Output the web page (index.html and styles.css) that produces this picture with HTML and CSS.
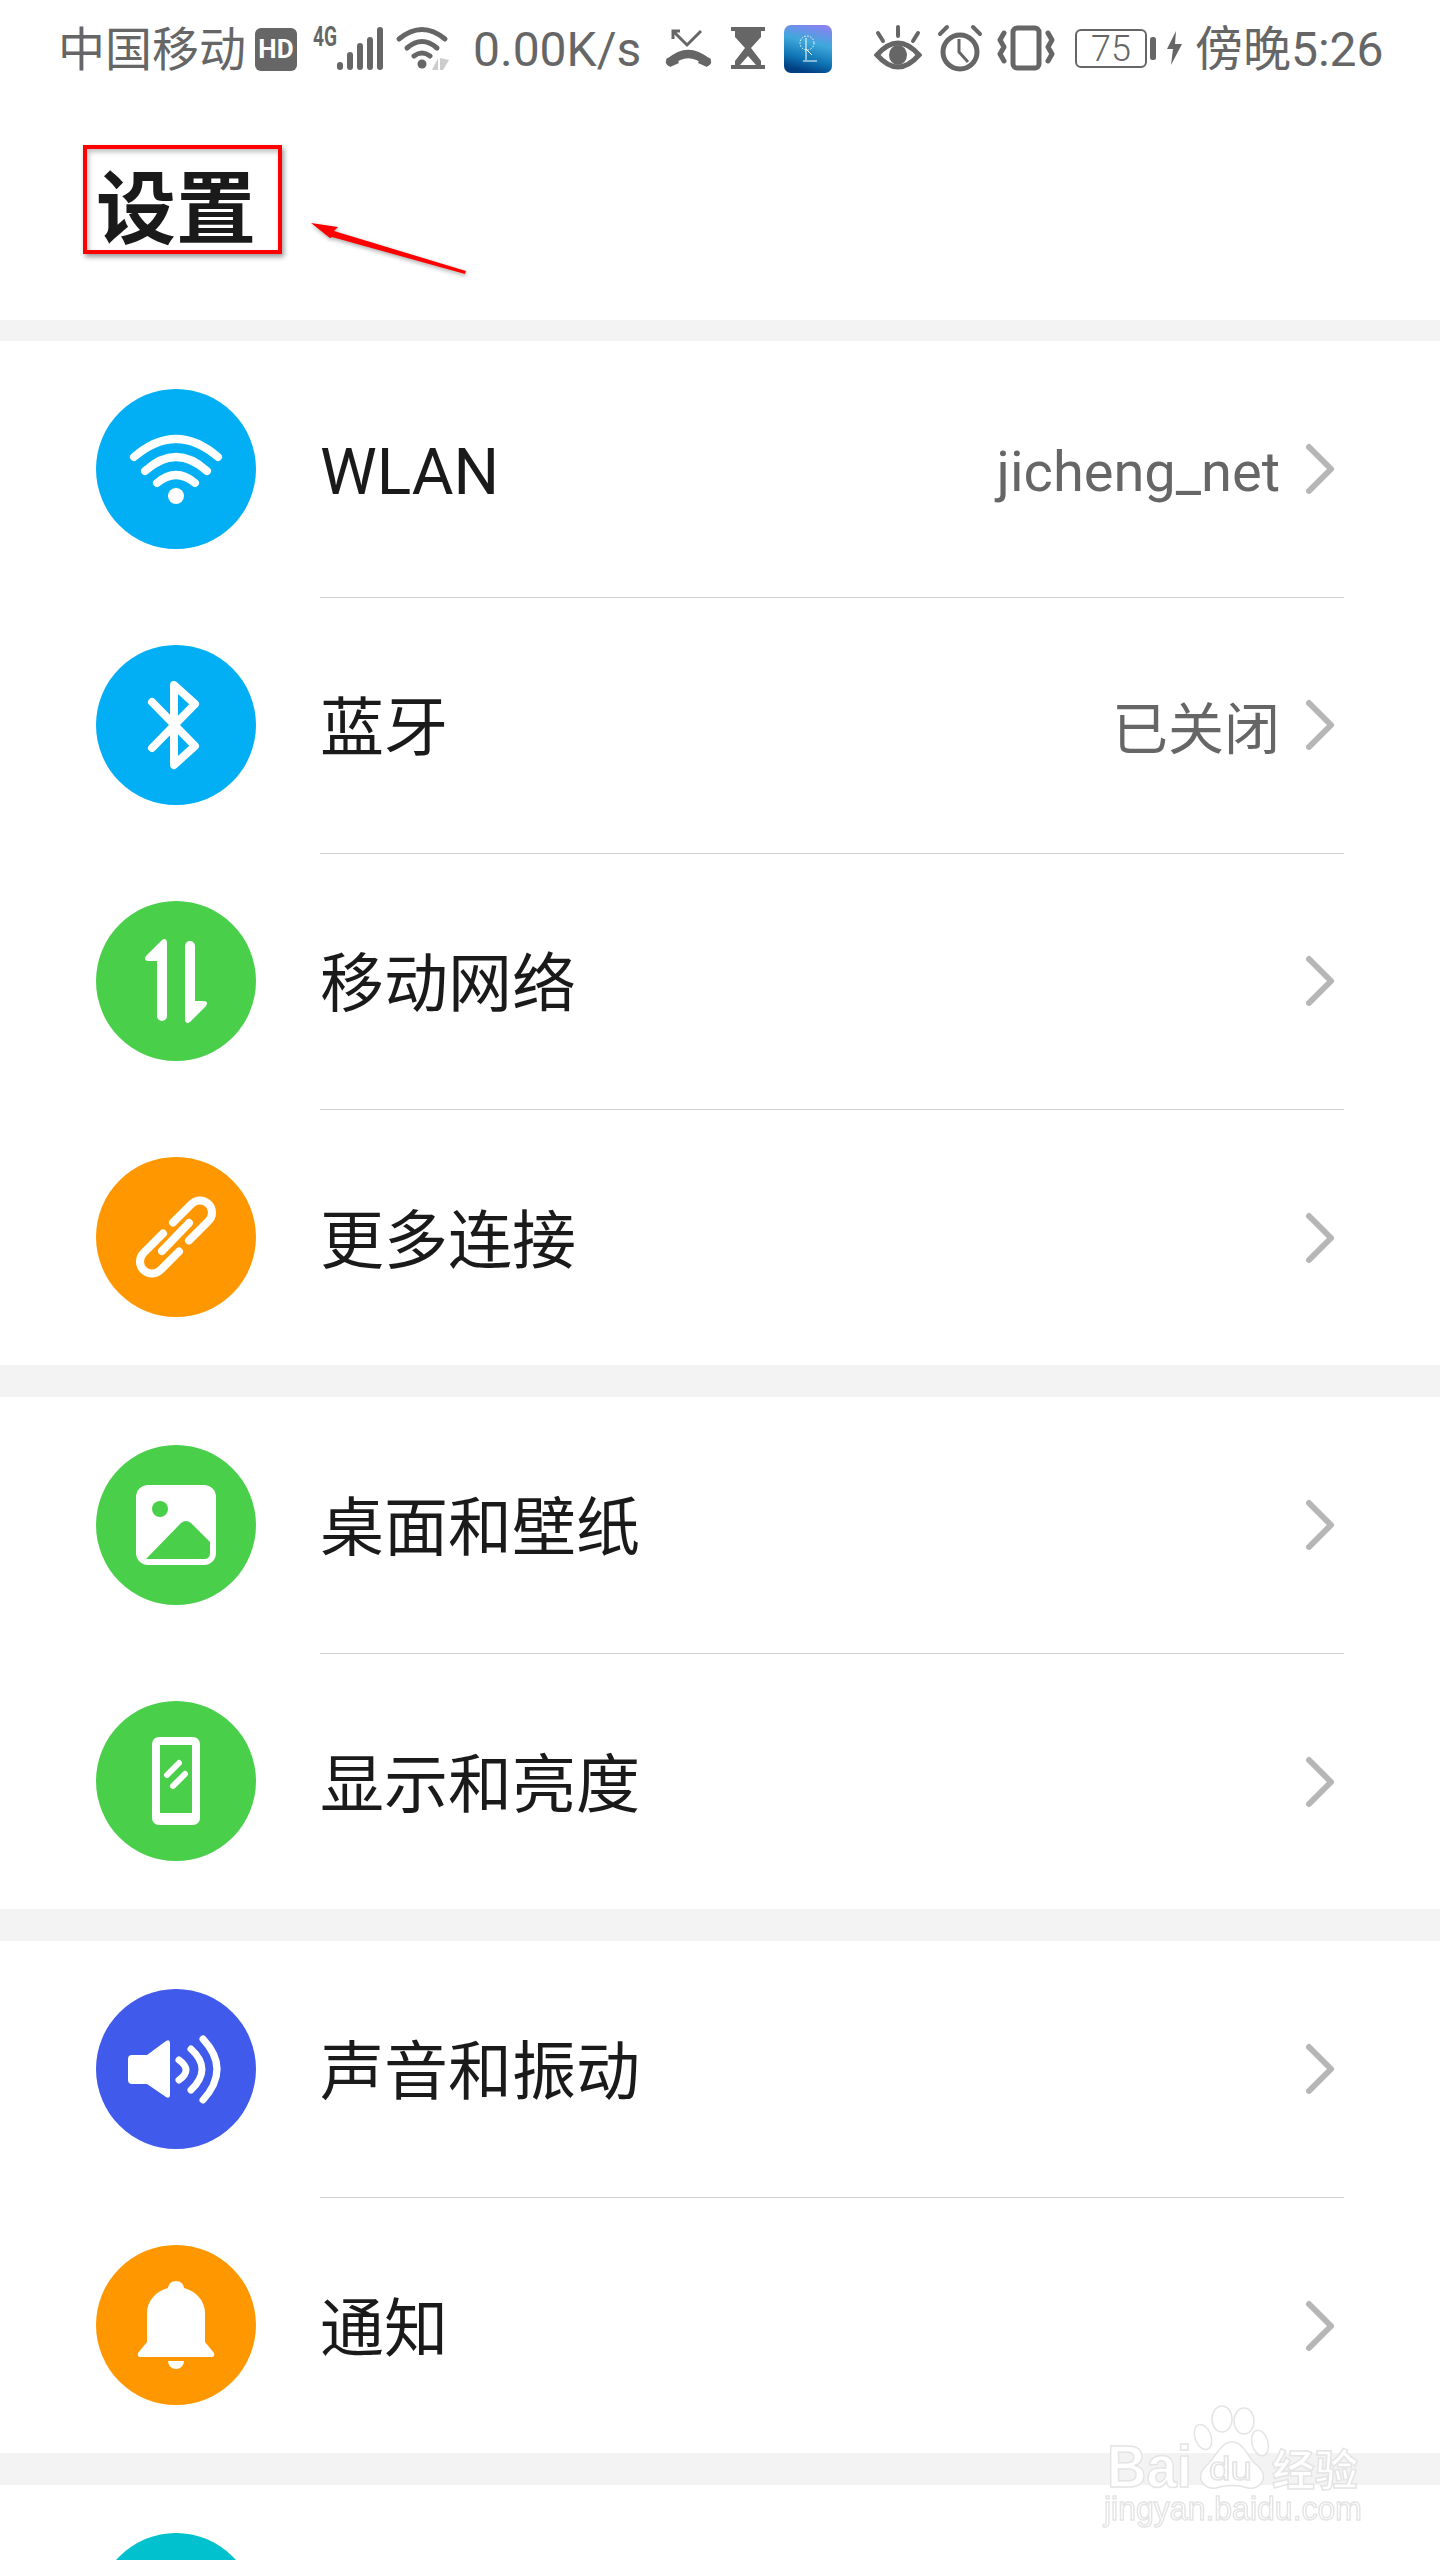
FILE: index.html
```html
<!DOCTYPE html>
<html lang="zh-CN">
<head>
    <meta charset="UTF-8">
    <meta name="viewport" content="width=device-width, initial-scale=1.0">
    <title>设置</title>
    <link rel="stylesheet" href="styles.css">
</head>
<body>
    <!-- status bar -->
    <div class="status-bar">
        <span class="carrier">中国移动</span>
        <span class="hd">HD</span>
        <svg class="sb-net" width="70" height="48" viewBox="0 0 70 48">
            <text class="sb-4g" x="0" y="21" textLength="24" lengthAdjust="spacingAndGlyphs">4G</text>
            <path d="M27 40v2M37 30v12M47 21v21M57 15v27M67 5v37" stroke="#666" stroke-width="6" stroke-linecap="round" fill="none"/>
        </svg>
        <svg class="sb-wifi" width="54" height="48" viewBox="0 0 54 48">
            <g stroke="#666" stroke-width="5" stroke-linecap="round" fill="none">
                <path d="M3 14Q26-5 49 14"/>
                <path d="M11 23Q26 10 41 23"/>
                <path d="M18 31Q26 25 34 31"/>
            </g>
            <circle cx="26" cy="39" r="4.5" fill="#666"/>
            <path d="M42 33V45H36ZM44 33L53 35L47 45H44Z" fill="#ccc"/>
        </svg>
        <span class="speed">0.00K/s</span>
        <svg class="sb-missed" width="47" height="48" viewBox="0 0 47 48">
            <path d="M8 14V6H15M8 6L22 20L36 6" stroke="#666" stroke-width="3" fill="none"/>
            <path d="M5 37Q23 21 42 37" stroke="#666" stroke-width="8" stroke-linecap="round" fill="none"/>
            <path d="M1 34L10 29L14 38L5 42ZM46 34L37 29L33 38L42 42Z" fill="#666"/>
        </svg>
        <svg class="sb-hourglass" width="34" height="48" viewBox="0 0 34 48">
            <path d="M0 2H34V6H30V12L20 23L30 36V40H34V44H0V40H4V36L14 23L4 12V6H0Z" fill="#666"/>
            <path d="M17 31L25 40H9Z" fill="#fff"/>
        </svg>
        <svg class="sb-app" width="48" height="48" viewBox="0 0 48 48">
            <defs>
                <linearGradient id="appGrad" x1="0.8" y1="0" x2="0.55" y2="1">
                    <stop offset="0" stop-color="#8c80f2"/>
                    <stop offset="0.4" stop-color="#3fa8dc"/>
                    <stop offset="0.75" stop-color="#0f74b4"/>
                    <stop offset="1" stop-color="#003f82"/>
                </linearGradient>
            </defs>
            <rect width="48" height="48" rx="7" fill="url(#appGrad)"/>
            <circle cx="23" cy="18" r="7" stroke="#fff" stroke-dasharray="1.5 1.5" fill="none"/>
            <path d="M22 13V24L28 30M22 24V35M19 36H33" stroke="#fff" fill="none"/>
        </svg>
        <svg class="sb-eye" width="48" height="48" viewBox="0 0 48 48">
            <path d="M24 2V11M4 8L9 16M44 8L39 16" stroke="#666" stroke-width="4" stroke-linecap="round"/>
            <path d="M3 30Q24 6 45 30Q24 54 3 30Z" stroke="#666" stroke-width="5" fill="none"/>
            <ellipse cx="24" cy="30" rx="9" ry="10" fill="#666"/>
        </svg>
        <svg class="sb-alarm" width="44" height="48" viewBox="0 0 44 48">
            <circle cx="22" cy="27" r="17" stroke="#666" stroke-width="5" fill="none"/>
            <path d="M2 9L9 2M42 9L35 2" stroke="#666" stroke-width="4" stroke-linecap="round"/>
            <path d="M21 14V27L30 37" stroke="#666" stroke-width="3" fill="none"/>
        </svg>
        <svg class="sb-vibrate" width="56" height="48" viewBox="0 0 56 48">
            <rect x="15" y="3" width="26" height="40" rx="4" stroke="#666" stroke-width="5" fill="none"/>
            <path d="M6 8L2 15L6 22L2 29L6 36M50 8L54 15L50 22L54 29L50 36" stroke="#666" stroke-width="5" stroke-linecap="round" stroke-linejoin="round" fill="none"/>
        </svg>
        <svg class="sb-battery" width="81" height="48" viewBox="0 0 81 48">
            <rect x="1" y="5" width="70" height="37" rx="5" stroke="#666" stroke-width="2" fill="none"/>
            <text class="sb-level" x="36" y="36" text-anchor="middle">75</text>
            <rect x="75" y="12" width="6" height="23" rx="2.5" fill="#666"/>
        </svg>
        <svg class="sb-bolt" width="17" height="48" viewBox="0 0 17 48">
            <path d="M10 6L1 24H7L5 40L16 19H9Z" fill="#666"/>
        </svg>
        <span class="clock">傍晚5:26</span>
    </div>

    <div class="page-head">
        <h1>设置</h1>
    </div>

    <div class="group">
        <div class="row">
            <svg class="icon" viewBox="0 0 160 160">
                <circle cx="80" cy="80" r="80" fill="#02aef4"/>
                <g stroke="#fff" stroke-width="8" stroke-linecap="round" fill="none">
                    <path d="M38 68Q80 32 122 68"/>
                    <path d="M49 82Q80 54 111 82"/>
                    <path d="M61 94Q80 78 99 94"/>
                </g>
                <circle cx="80" cy="107" r="8" fill="#fff"/>
            </svg>
            <div class="row-main">
                <span class="label latin">WLAN</span>
                <span class="value latin">jicheng_net</span>
                <svg class="chevron" viewBox="0 0 32 56"><path d="M5 6L27 28L5 50"/></svg>
            </div>
        </div>
        <div class="row">
            <svg class="icon" viewBox="0 0 160 160">
                <circle cx="80" cy="80" r="80" fill="#02aef4"/>
                <path d="M56 57L99 101L78 120V40L99 59L56 103" stroke="#fff" stroke-width="8" stroke-linecap="round" stroke-linejoin="round" fill="none"/>
            </svg>
            <div class="row-main">
                <span class="label">蓝牙</span>
                <span class="value">已关闭</span>
                <svg class="chevron" viewBox="0 0 32 56"><path d="M5 6L27 28L5 50"/></svg>
            </div>
        </div>
        <div class="row">
            <svg class="icon" viewBox="0 0 160 160">
                <circle cx="80" cy="80" r="80" fill="#4acf4b"/>
                <path d="M66 39L50 55Q47 60 53 60H61V115A5 5 0 0 0 71 115V41Q70 36 66 39Z" fill="#fff"/>
                <path d="M66 39L50 55Q47 60 53 60H61V115A5 5 0 0 0 71 115V41Q70 36 66 39Z" fill="#fff" transform="rotate(180 80 80)"/>
            </svg>
            <div class="row-main">
                <span class="label">移动网络</span>
                <svg class="chevron" viewBox="0 0 32 56"><path d="M5 6L27 28L5 50"/></svg>
            </div>
        </div>
        <div class="row">
            <svg class="icon" viewBox="0 0 160 160">
                <circle cx="80" cy="80" r="80" fill="#ff9800"/>
                <g stroke="#fff" stroke-width="8" stroke-linecap="round" fill="none">
                    <path d="M77 65.5L95.5 47A12 12 0 0 1 112.5 64L93 83.5"/>
                    <path d="M83 94.5L64.5 113A12 12 0 0 1 47.500 96L67 76.500"/>
                    <path d="M66 94L93 66"/>
                </g>
            </svg>
            <div class="row-main">
                <span class="label">更多连接</span>
                <svg class="chevron" viewBox="0 0 32 56"><path d="M5 6L27 28L5 50"/></svg>
            </div>
        </div>
    </div>

    <div class="group">
        <div class="row">
            <svg class="icon" viewBox="0 0 160 160">
                <circle cx="80" cy="80" r="80" fill="#4acf4b"/>
                <rect x="40" y="40" width="80" height="80" rx="12" fill="#fff"/>
                <circle cx="64" cy="64" r="8" fill="#4acf4b"/>
                <path d="M50 114L85 78Q90 74 95 78L114 97V108Q114 114 108 114Z" fill="#4acf4b"/>
            </svg>
            <div class="row-main">
                <span class="label">桌面和壁纸</span>
                <svg class="chevron" viewBox="0 0 32 56"><path d="M5 6L27 28L5 50"/></svg>
            </div>
        </div>
        <div class="row">
            <svg class="icon" viewBox="0 0 160 160">
                <circle cx="80" cy="80" r="80" fill="#4acf4b"/>
                <rect x="56" y="36" width="48" height="88" rx="7" fill="#fff"/>
                <rect x="64" y="44" width="32" height="68" fill="#4acf4b"/>
                <path d="M71 74L83 62M77 85L89 73" stroke="#fff" stroke-width="6" stroke-linecap="round"/>
            </svg>
            <div class="row-main">
                <span class="label">显示和亮度</span>
                <svg class="chevron" viewBox="0 0 32 56"><path d="M5 6L27 28L5 50"/></svg>
            </div>
        </div>
    </div>

    <div class="group">
        <div class="row">
            <svg class="icon" viewBox="0 0 160 160">
                <circle cx="80" cy="80" r="80" fill="#405aeb"/>
                <path d="M36 66H51L70 52Q74 50 74 54V106Q74 110 70 108L51 95H36Q32 95 32 91V70Q32 66 36 66Z" fill="#fff"/>
                <g stroke="#fff" stroke-width="7" stroke-linecap="round" fill="none">
                    <path d="M83 71Q97 81 83 91"/>
                    <path d="M95 60Q117 80 95 101"/>
                    <path d="M107 50Q135 80 107 111"/>
                </g>
            </svg>
            <div class="row-main">
                <span class="label">声音和振动</span>
                <svg class="chevron" viewBox="0 0 32 56"><path d="M5 6L27 28L5 50"/></svg>
            </div>
        </div>
        <div class="row">
            <svg class="icon" viewBox="0 0 160 160">
                <circle cx="80" cy="80" r="80" fill="#ff9800"/>
                <path d="M72 43A8 7 0 0 1 88 43C100 46 109 56 109 68V97L118 108Q119 112 116 112H44Q41 112 42 108L51 97V68C51 56 60 46 72 43Z" fill="#fff"/>
                <path d="M72 116H88A8 8 0 0 1 72 116Z" fill="#fff"/>
            </svg>
            <div class="row-main">
                <span class="label">通知</span>
                <svg class="chevron" viewBox="0 0 32 56"><path d="M5 6L27 28L5 50"/></svg>
            </div>
        </div>
    </div>

    <div class="group">
        <div class="row">
            <svg class="icon" viewBox="0 0 160 160">
                <circle cx="80" cy="80" r="80" fill="#00c1cd"/>
            </svg>
        </div>
    </div>

    <!-- annotation drawn on top of the screenshot -->
    <div class="mark-box"></div>
    <svg class="mark-arrow" width="180" height="70" viewBox="0 0 180 70">
        <path d="M1 3L28 7L24 11L156 51L155 54L22 17L20 18Z" fill="#f00"/>
    </svg>

    <!-- watermark -->
    <svg class="watermark" width="270" height="135" viewBox="0 0 270 135">
        <g class="wm-paw">
            <ellipse cx="103" cy="37" rx="8" ry="13" transform="rotate(-20 103 37)"/>
            <ellipse cx="122" cy="19" rx="10" ry="13"/>
            <ellipse cx="144" cy="21" rx="10" ry="13"/>
            <ellipse cx="160" cy="43" rx="8" ry="13" transform="rotate(-15 160 43)"/>
            <path d="M132 42C145 42 148 60 158 66C170 78 160 90 148 88C138 85 126 85 116 88C104 90 94 78 106 66C116 58 120 42 132 42Z"/>
        </g>
        <text class="wm-big" x="7" y="87" textLength="85" lengthAdjust="spacingAndGlyphs">Bai</text>
        <text class="wm-du" x="109" y="80" textLength="43" lengthAdjust="spacingAndGlyphs">du</text>
        <text class="wm-cn" x="172" y="86">经验</text>
        <text class="wm-url" x="4" y="120" textLength="258" lengthAdjust="spacingAndGlyphs">jingyan.baidu.com</text>
    </svg>
</body>
</html>
```
FILE: styles.css
```css
/* settings screen */
html, body {
    height: 2560px;
    overflow: hidden;
}
body {
    margin: 0;
    position: relative;
    background-color: #f3f3f3;
    font-family: Roboto, "Noto Sans CJK SC", sans-serif;
}

/* status bar */
.status-bar {
    display: flex;
    align-items: center;
    height: 98px;
    padding-left: 58px;
    background: #fff;
    color: #666;
    font-size: 48px;
    line-height: 50px;
    white-space: nowrap;
}
.status-bar svg {
    flex: none;
    overflow: visible;
}
.carrier {
    width: 192px;
    padding-top: 2px;
    font-size: 47px;
}
.hd {
    width: 42px;
    height: 43px;
    margin-left: 5px;
    border-radius: 6px;
    background: #666;
    color: #fff;
    font-size: 26px;
    font-weight: 700;
    line-height: 43px;
    text-align: center;
}
.sb-4g {
    font-size: 27px;
    font-weight: 700;
    fill: #666;
}
.sb-level {
    font-size: 36px;
    font-weight: 300;
    fill: #666;
}
.sb-net { margin-left: 16px; }
.sb-wifi { margin-left: 13px; }
.speed { width: 168px; margin-left: 23px; padding-top: 2px; }
.sb-missed { margin-left: 24px; }
.sb-hourglass { margin-left: 19px; }
.sb-app { margin-left: 19px; }
.sb-eye { margin-left: 42px; }
.sb-alarm { margin-left: 16px; }
.sb-vibrate { margin-left: 16px; }
.sb-battery { margin-left: 21px; }
.sb-bolt { margin-left: 10px; }
.clock { margin-left: 12px; padding-top: 2px; }

/* title */
.page-head {
    height: 222px;
    background: #fff;
    margin-bottom: 21px;
}
.page-head h1 {
    margin: 0;
    padding: 72px 0 0 96px;
    color: #1a1a1a;
    font-size: 80px;
    font-weight: 700;
    line-height: 80px;
}

/* list groups */
.group {
    background: #fff;
    margin-bottom: 32px;
}
.row {
    display: flex;
    align-items: flex-start;
    height: 256px;
    padding-left: 96px;
}
.icon {
    flex: none;
    width: 160px;
    height: 160px;
    margin: 48px 64px 0 0;
}
.row-main {
    display: flex;
    flex: 1;
    align-items: center;
    height: 257px;
    margin-right: 96px;
    border-bottom: 1px solid #d0d0d0;
    box-sizing: border-box;
}
.row:last-child .row-main {
    border-bottom: none;
}
.label {
    flex: 1;
    padding-bottom: 6px;
    color: #1a1a1a;
    font-size: 64px;
}
.value {
    padding-bottom: 2px;
    color: #666;
    font-size: 56px;
}
.label.latin, .value.latin {
    padding-top: 6px;
    padding-bottom: 0;
}
.chevron {
    flex: none;
    width: 32px;
    height: 56px;
    margin: 0 8px 0 24px;
}
.chevron path {
    fill: none;
    stroke: #b6b6b6;
    stroke-width: 6;
    stroke-linecap: round;
    stroke-linejoin: round;
}

/* annotation */
.mark-box {
    position: absolute;
    left: 83px;
    top: 145px;
    width: 199px;
    height: 109px;
    box-sizing: border-box;
    border: 4px solid #f00;
    box-shadow: 2px 3px 5px rgba(0,0,0,0.4), inset 2px 3px 5px rgba(0,0,0,0.25);
}
.mark-arrow {
    position: absolute;
    left: 310px;
    top: 220px;
    filter: drop-shadow(1px 2px 2px rgba(0,0,0,0.35));
}

/* watermark */
.watermark {
    position: absolute;
    left: 1100px;
    top: 2400px;
    filter: blur(0.6px);
}
.watermark text, .wm-paw {
    fill: #fff;
    stroke: #e4e4e4;
    stroke-width: 1.5;
}
.wm-big {
    font-family: "Liberation Sans", sans-serif;
    font-size: 60px;
    font-weight: 700;
}
.wm-du {
    font-family: "Liberation Sans", sans-serif;
    font-size: 34px;
}
.wm-cn {
    font-family: "Noto Sans CJK SC", sans-serif;
    font-size: 43px;
    font-weight: 700;
}
.wm-url {
    font-family: "Liberation Sans", sans-serif;
    font-size: 34px;
}
```
